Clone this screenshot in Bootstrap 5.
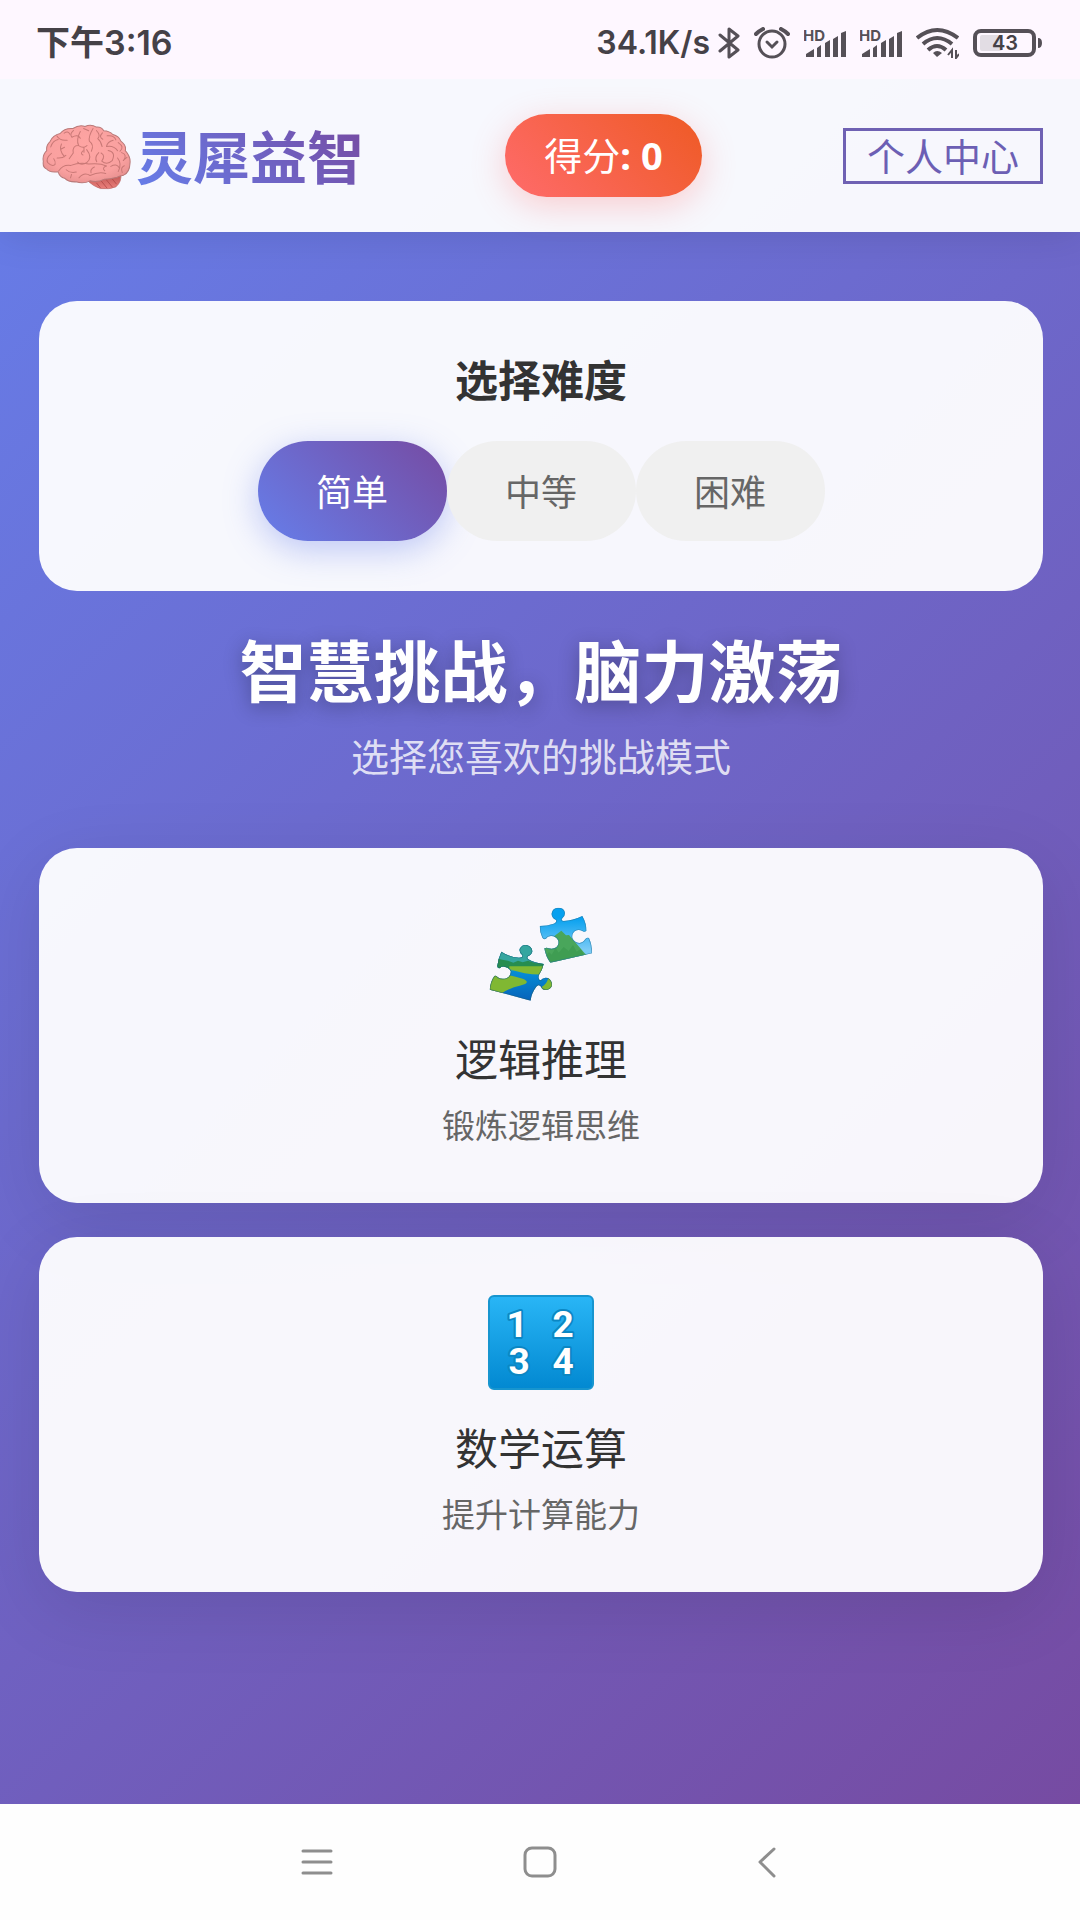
<!DOCTYPE html>
<html lang="zh-CN">
<head>
<meta charset="utf-8">
<meta name="viewport" content="width=device-width, initial-scale=1">
<title>灵犀益智</title>
<link href="https://cdn.jsdelivr.net/npm/bootstrap@5.3.0/dist/css/bootstrap.min.css" rel="stylesheet">
<style>
  body { font-family: "Noto Sans", "Noto Sans CJK SC", sans-serif; background: #fefefe; }
  svg { display: block; flex: none; }
  .status-bar { height: 79px; padding: 6px 38px 0 36px; background: #fef7ff; color: #454147; font: 600 32px/40px Inter, "Noto Sans CJK SC", sans-serif; }
  .status-time { font-size: 34px; }
  .status-icons { gap: 14px; }
  .app-shell { overflow: hidden; background: linear-gradient(135deg, #667eea 0%, #764ba2 100%); }
  .app-header { height: 153px; padding: 0 37px 0 42px; background: rgba(255,255,255,.95); box-shadow: 0 4px 36px rgba(0,0,0,.1); }
  .brand-name { margin: 0; font-size: 57px; line-height: 68px; font-weight: 700; background: linear-gradient(45deg, #667eea, #764ba2); -webkit-background-clip: text; background-clip: text; color: transparent; }
  .brand-row { padding-top: 2px; }
  .score-pill { height: 83px; padding: 0 39px; border-radius: 42px; color: #fff; font-size: 38px; background: linear-gradient(45deg, #ff6b6b, #ee5a24); box-shadow: 0 9px 34px rgba(255,107,107,.3); }
  .score-pill b { font-size: 38px; }
  .profile-btn { height: 56px; padding: 0 21px; border: 3px solid #6f61b3; border-radius: 0; color: #6c5fb4; font-size: 38px; line-height: 50px; }
  .profile-btn:hover { color: #fff; background: #6f61b3; }
  .app-main { padding: 69px 37px 68px 39px; }
  .panel { background: rgba(255,255,255,.95); border: 0; border-radius: 38px; }
  .level-panel { padding: 54px 38px 50px; }
  .level-title { margin: 0 0 34px; font-size: 43px; line-height: 52px; font-weight: 700; color: #333; }
  .level-btn { width: 189px; height: 100px; padding: 4px 0 0; border: 0; border-radius: 54px; background: #f0f0f0; color: #666; font-size: 36px; }
  .level-btn.active { color: #fff; background: linear-gradient(45deg, #667eea, #764ba2); box-shadow: 0 9px 34px rgba(102,126,234,.4); }
  .hero { margin: 40px 0 69px; }
  .hero h1 { margin: 0 0 22px; font-size: 67px; line-height: 80px; font-weight: 700; color: #fff; text-shadow: 0 5px 20px rgba(0,0,0,.3); }
  .hero p { margin: 0; font-size: 38px; line-height: 46px; color: rgba(255,255,255,.8); }
  .game-list { gap: 34px; }
  .game-card { padding: 58px 38px 57px; box-shadow: 0 18px 72px rgba(0,0,0,.1); }
  .game-name { margin: 32px 0 20px; font-size: 43px; line-height: 52px; color: #333; }
  .game-desc { font-size: 33px; line-height: 40px; color: #666; }
  .nav-keys { height: 116px; background: #fefefe; padding: 0 285px; }
  .key-btn { width: 64px; height: 64px; border: 0; padding: 0; background: none; }
</style>
<script src="https://cdn.jsdelivr.net/npm/bootstrap@5.3.0/dist/js/bootstrap.bundle.min.js"></script>
</head>
<body class="min-vh-100 d-flex flex-column">

<div class="status-bar d-flex align-items-center justify-content-between">
  <span class="status-time">下午3:16</span>
  <div class="d-flex align-items-center">
    <span class="me-2">34.1K/s</span>
    <div class="status-icons d-flex align-items-center">
      <svg width="22" height="32" viewBox="0 0 22 32" fill="none" stroke="#555057" stroke-width="3" stroke-linejoin="round" stroke-linecap="round"><path d="M2 8 20 23 11 30V2L20 9 2 24"/></svg>
      <svg width="36" height="32" viewBox="0 0 36 32" fill="none" stroke="#555057" stroke-width="3" stroke-linecap="round"><circle cx="18" cy="17" r="13"/><path d="M13 15 18 20 23 15"/><path d="M2 7Q5 4 9 2M34 7Q31 4 27 2" stroke-width="4"/></svg>
      <svg width="42" height="36" viewBox="-2 -5 42 36" fill="#555057"><text x="-3" y="11" font-family="Inter, sans-serif" font-size="15" font-weight="700">HD</text><path d="M0 27V24L8 19V27ZM11 18 15 15V27H11ZM19 13 24 10V27H19ZM27 9 32 6V27H27ZM35 3 40 1V27H35Z"/></svg>
      <svg width="42" height="36" viewBox="-2 -5 42 36" fill="#555057"><text x="-3" y="11" font-family="Inter, sans-serif" font-size="15" font-weight="700">HD</text><path d="M0 27V24L8 19V27ZM11 18 15 15V27H11ZM19 13 24 10V27H19ZM27 9 32 6V27H27ZM35 3 40 1V27H35Z"/></svg>
      <svg width="43" height="32" viewBox="0 0 43 32"><g fill="none" stroke="#555057" stroke-width="4"><path d="M1 11Q21-5 42 11M7 17Q21 5 36 17M12 23Q21 15 30 23"/></g><path d="M17 26Q21 22 26 26L21 30Z" fill="#555057"/><path d="M36 31V23L32 28M40 23V31L43 27" fill="none" stroke="#555057" stroke-width="2"/></svg>
      <svg width="69" height="30" viewBox="0 0 69 30"><rect x="2" y="3" width="59" height="24" rx="6" fill="none" stroke="#555057" stroke-width="4"/><rect x="7" y="7" width="22" height="16" rx="2" fill="#e2dde4"/><path d="M65 10Q69 10 69 15T65 20Z" fill="#555057"/><text x="32" y="22" text-anchor="middle" font-family="Inter, sans-serif" font-size="20" font-weight="600" fill="#454147">43</text></svg>
    </div>
  </div>
</div>

<div class="app-shell flex-grow-1">
  <header class="app-header d-flex align-items-center justify-content-between">
    <div class="brand-row d-flex align-items-center">
      <svg class="me-1" width="90" height="66" viewBox="38 40 268 196">
        <defs>
          <radialGradient id="cortex" cx=".5" cy=".4" r=".62"><stop offset="0" stop-color="#ffa5a3"/><stop offset=".75" stop-color="#f9a09f"/><stop offset="1" stop-color="#e99291"/></radialGradient>
          <linearGradient id="cerebellum" x1="0" y1="0" x2="0" y2="1"><stop offset="0" stop-color="#bd5350"/><stop offset="1" stop-color="#ec817d"/></linearGradient>
        </defs>
        <path d="M173 208Q190 225 212 232 240 235 258 227 277 210 272 188L210 190Z" fill="url(#cerebellum)" stroke="#b96966" stroke-width="2"/>
        <path d="M200 215 213 231M214 209 232 231M228 204 248 228M243 198 260 219" stroke="#a8413f" stroke-width="2" fill="none"/>
        <path d="M42 151Q38 133 52 119 50 102 62 92 70 73 92 68 105 51 130 53 149 41 166 47 184 39 200 49 215 48 222 60 239 61 249 71 267 75 273 91 290 104 286 119 303 138 300 157 299 184 281 192 270 193 262 198 239 204 224 204 203 215 181 209 162 219 139 212 117 213 105 201 91 198 86 182 59 185 52 174 39 168 42 151Z" fill="url(#cortex)" stroke="#b97978" stroke-width="3"/>
        <g fill="none" stroke="#c97876" stroke-width="3" stroke-linecap="round" stroke-linejoin="round">
          <path d="M64 108Q70 89 86 86M82 75Q91 91 113 88M96 99Q87 117 105 137M105 109 94 115M66 127Q48 142 55 155 68 168 77 160 79 151 73 143M83 141Q99 143 109 133"/>
          <path d="M104 67Q115 59 121 70M132 59Q119 70 127 79M127 79Q145 69 152 82M152 62Q139 87 147 104 161 114 172 104M162 53 177 60M190 53Q176 76 179 91 194 102 185 121M147 104Q128 103 131 126M131 126 119 143M160 120Q151 128 160 132M163 109V124M171 116Q189 139 172 154M172 154Q155 165 144 153"/>
          <path d="M200 59Q214 74 204 83 214 91 217 107M218 66Q206 78 219 85M232 75Q253 72 258 87M250 88Q232 93 230 107M230 107Q250 102 263 119M265 95Q285 108 270 121M275 125Q293 131 281 148M291 139 280 148M235 119Q259 123 247 149 231 164 216 150M216 150Q228 134 214 126M207 125Q193 139 201 152"/>
          <path d="M88 179Q101 159 124 163 151 153 177 159 211 155 230 165M230 165Q215 170 225 179M110 176Q121 187 140 183M126 190 123 200M148 200Q164 181 181 193M181 193Q207 181 228 187M194 168Q181 174 184 185M243 166Q260 156 268 170M263 141Q277 158 265 181M283 164Q271 169 277 184"/>
        </g>
      </svg>
      <h2 class="brand-name">灵犀益智</h2>
    </div>
    <div class="score-pill d-flex align-items-center"><span>得分<b>: 0</b></span></div>
    <button type="button" class="profile-btn btn">个人中心</button>
  </header>

  <main class="app-main">
    <section class="panel level-panel text-center">
      <h3 class="level-title">选择难度</h3>
      <div class="d-flex justify-content-center">
        <button type="button" class="level-btn active" aria-pressed="true">简单</button>
        <button type="button" class="level-btn" aria-pressed="false">中等</button>
        <button type="button" class="level-btn" aria-pressed="false">困难</button>
      </div>
    </section>

    <section class="hero text-center">
      <h1>智慧挑战，脑力激荡</h1>
      <p>选择您喜欢的挑战模式</p>
    </section>

    <div class="game-list d-flex flex-column">
      <button type="button" class="panel game-card d-flex flex-column align-items-center">
        <svg width="106" height="96" viewBox="200 76 318 288">
          <defs>
            <path id="piece-sky" d="M355 136Q378 136 397 129 407 125 404 118 389 111 391 98 394 82 410 81 429 81 431 97 431 106 423 113 418 120 427 121 454 120 483 106 496 129 495 151 488 156 483 151 471 145 460 152 451 160 453 172 459 186 474 187 486 186 492 175 498 169 503 172 513 194 512 218L387 246Q373 228 369 203 376 199 382 203 394 207 405 200 415 189 410 178 403 166 389 166 378 167 374 174 367 178 363 171 355 155 355 136Z"/>
            <path id="piece-river" d="M240 213Q264 229 293 231 305 231 303 224 291 213 296 203 303 191 316 193 332 197 333 212 332 222 321 226 315 231 321 236 340 247 367 250 362 270 353 283 349 297 358 299 366 288 380 292 393 300 392 315 386 328 372 328 361 326 359 318 352 309 345 318 330 338 328 360L205 327Q207 303 219 286 226 283 229 290 243 298 257 292 269 285 268 272 264 260 249 258 241 257 236 262 228 264 228 256 231 232 240 213Z"/>
            <clipPath id="clip-sky"><use href="#piece-sky"/></clipPath>
            <clipPath id="clip-river"><use href="#piece-river"/></clipPath>
            <linearGradient id="sky" x1="0" y1="0" x2="0" y2="1"><stop offset=".2" stop-color="#06a0ef"/><stop offset=".75" stop-color="#7acbf6"/></linearGradient>
            <linearGradient id="river" x1="0" y1="0" x2="0" y2="1"><stop offset=".35" stop-color="#0497dc"/><stop offset="1" stop-color="#0760b9"/></linearGradient>
          </defs>
          <g clip-path="url(#clip-sky)">
            <rect x="350" y="76" width="168" height="175" fill="url(#sky)"/>
            <path d="M350 215 402 164 420 150 434 164 443 163 490 218 518 240V252H350Z" fill="#49a65b"/>
            <path d="M370 230 383 214 391 222 403 202 412 216 427 199 442 211 455 193 466 213 478 205 490 228V250H370Z" fill="#36964b" opacity=".55"/>
            <use href="#piece-sky" fill="none" stroke="#27739b" stroke-width="4" stroke-opacity=".65"/>
          </g>
          <g clip-path="url(#clip-river)">
            <rect x="200" y="190" width="200" height="175" fill="url(#river)"/>
            <path d="M220 190H400V270H220Z" fill="#35a6a0"/>
            <path d="M220 231 243 237 260 240 276 246 290 240 304 245 320 240 342 248H370V265H220Z" fill="#268d50"/>
            <path d="M264 257H372V281Q320 285 264 265ZM200 275Q260 280 304 294 333 306 295 315 270 320 241 338L200 330ZM362 318Q375 313 382 290H398V335H362Z" fill="#80b832"/>
            <use href="#piece-river" fill="none" stroke="#245d66" stroke-width="4" stroke-opacity=".6"/>
          </g>
        </svg>
        <span class="game-name">逻辑推理</span>
        <span class="game-desc">锻炼逻辑思维</span>
      </button>

      <button type="button" class="panel game-card d-flex flex-column align-items-center">
        <svg width="106" height="96" viewBox="0 0 106 96">
          <defs><linearGradient id="keypad" x1="0" y1="0" x2="0" y2="1"><stop offset="0" stop-color="#29b6f6"/><stop offset="1" stop-color="#0288d1"/></linearGradient></defs>
          <rect x="1" y="1" width="104" height="93" rx="5" fill="url(#keypad)" stroke="#1795cf" stroke-width="2"/>
          <g font-family="Roboto, sans-serif" font-size="37" font-weight="700" text-anchor="middle" fill="#fff" stroke="#0b87c4" stroke-width="4" stroke-linejoin="round" paint-order="stroke">
            <text x="29" y="42">1</text><text x="75" y="42">2</text><text x="31" y="79">3</text><text x="75" y="79">4</text>
          </g>
        </svg>
        <span class="game-name">数学运算</span>
        <span class="game-desc">提升计算能力</span>
      </button>
    </div>
  </main>
</div>

<nav class="nav-keys d-flex align-items-center justify-content-between" aria-label="系统导航">
  <button type="button" class="key-btn" aria-label="最近任务"><svg width="64" height="64" viewBox="0 0 64 64" stroke="#8e8e8e" stroke-width="3" stroke-linecap="round"><path d="M18 21H46M18 32H46M18 43H46"/></svg></button>
  <button type="button" class="key-btn" aria-label="主屏幕"><svg width="64" height="64" viewBox="0 0 64 64" fill="none" stroke="#8e8e8e" stroke-width="3"><rect x="17" y="18" width="30" height="28" rx="7"/></svg></button>
  <button type="button" class="key-btn" aria-label="返回"><svg width="64" height="64" viewBox="0 0 64 64" fill="none" stroke="#8e8e8e" stroke-width="3" stroke-linecap="round" stroke-linejoin="round"><path d="M43 19 29 32 43 46"/></svg></button>
</nav>
</body>
</html>
